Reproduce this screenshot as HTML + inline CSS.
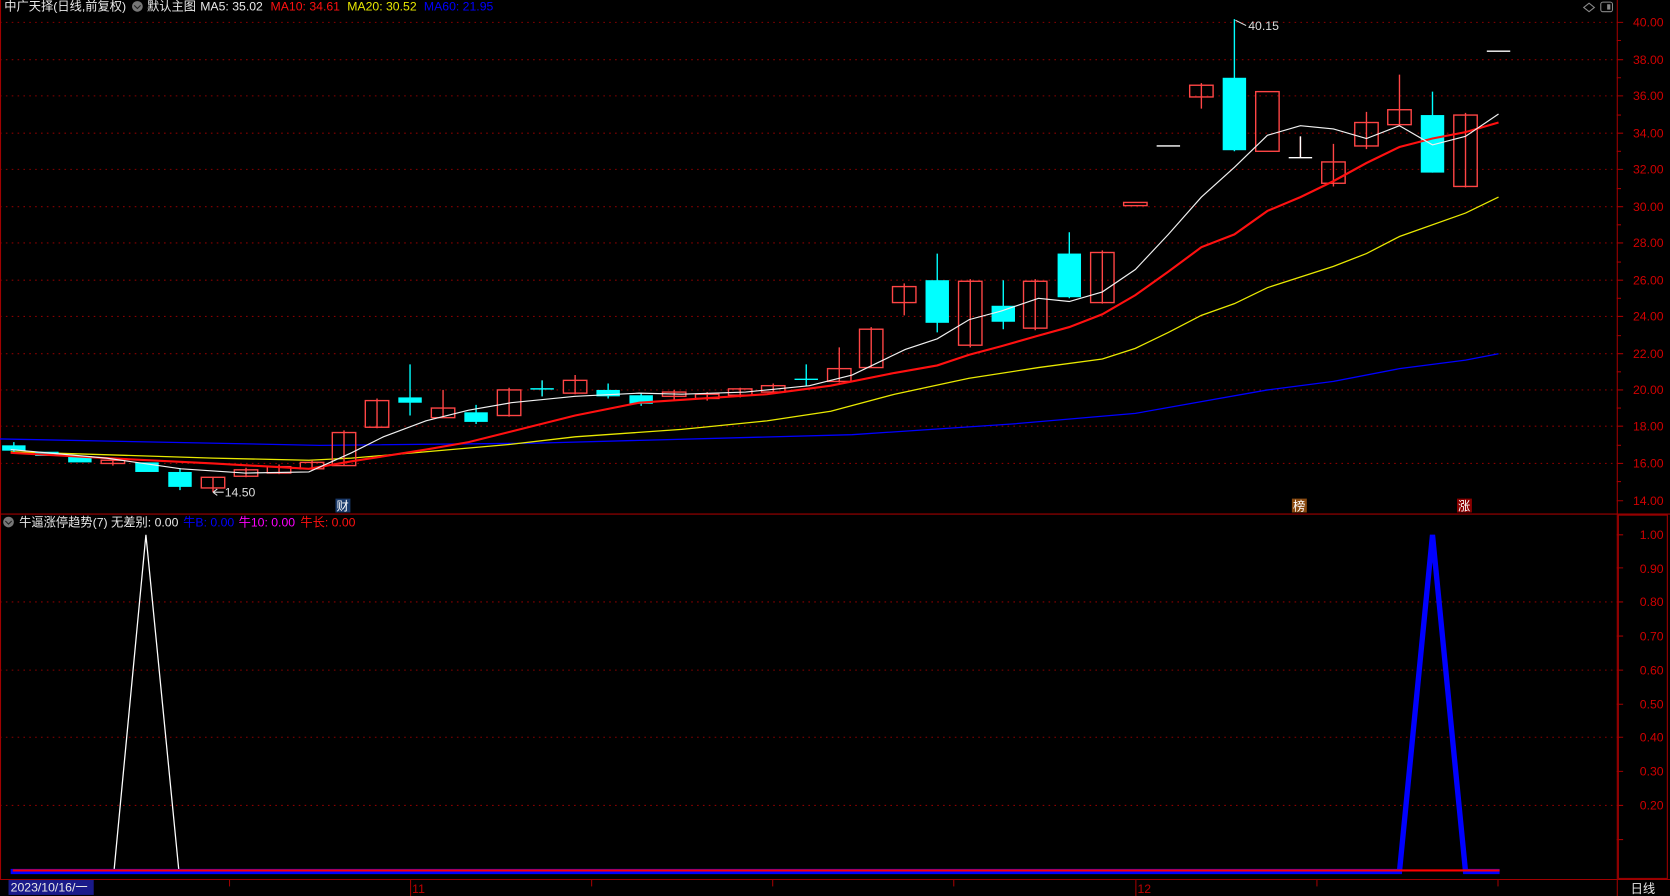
<!DOCTYPE html>
<html><head><meta charset="utf-8"><style>
html,body{margin:0;padding:0;background:#000;width:1670px;height:896px;overflow:hidden}
svg{display:block}
text{font-family:"Liberation Sans","Noto Sans CJK SC",sans-serif;font-size:11.5px}
</style></head><body>
<svg width="1670" height="896" viewBox="0 0 1568 841" preserveAspectRatio="none">
<rect width="1568" height="841" fill="#000"/>
<g stroke="#8a0000" stroke-width="1" stroke-dasharray="1.5,4">
<line x1="0" y1="21" x2="1518" y2="21"/><line x1="0" y1="56" x2="1518" y2="56"/><line x1="0" y1="90" x2="1518" y2="90"/><line x1="0" y1="125" x2="1518" y2="125"/><line x1="0" y1="159" x2="1518" y2="159"/><line x1="0" y1="194" x2="1518" y2="194"/><line x1="0" y1="228" x2="1518" y2="228"/><line x1="0" y1="263" x2="1518" y2="263"/><line x1="0" y1="297" x2="1518" y2="297"/><line x1="0" y1="332" x2="1518" y2="332"/><line x1="0" y1="366" x2="1518" y2="366"/><line x1="0" y1="400" x2="1518" y2="400"/><line x1="0" y1="435" x2="1518" y2="435"/>
<line x1="0" y1="565" x2="1518" y2="565"/><line x1="0" y1="629" x2="1518" y2="629"/><line x1="0" y1="692" x2="1518" y2="692"/><line x1="0" y1="756" x2="1518" y2="756"/>
</g>
<g stroke="#a00000" fill="none">
<line x1="1518.5" y1="0" x2="1518.5" y2="841"/>
<line x1="0" y1="482.5" x2="1568" y2="482.5"/>
<line x1="0" y1="825.5" x2="1568" y2="825.5"/>
<line x1="0.5" y1="0" x2="0.5" y2="825"/>
<rect x="1519.5" y="483.5" width="46" height="341"/>
<line x1="385.5" y1="826" x2="385.5" y2="841"/><line x1="1066.5" y1="826" x2="1066.5" y2="841"/>
<line x1="215.5" y1="826" x2="215.5" y2="832"/><line x1="555.5" y1="826" x2="555.5" y2="832"/><line x1="725.5" y1="826" x2="725.5" y2="832"/><line x1="895.5" y1="826" x2="895.5" y2="832"/><line x1="1236.5" y1="826" x2="1236.5" y2="832"/><line x1="1406.5" y1="826" x2="1406.5" y2="832"/>
</g>
<g stroke="#a00000">
<path d="M1518 21h6M1518 38h4M1518 56h6M1518 73h4M1518 90h6M1518 108h4M1518 125h6M1518 142h4M1518 159h6M1518 177h4M1518 194h6M1518 211h4M1518 228h6M1518 246h4M1518 263h6M1518 280h4M1518 297h6M1518 315h4M1518 332h6M1518 349h4M1518 366h6M1518 383h4M1518 400h6M1518 418h4M1518 435h6M1518 452h4M1518 470h6"/>
<path d="M1518 502h6M1518 533h6M1518 565h6M1518 597h6M1518 629h6M1518 661h6M1518 692h6M1518 724h6M1518 756h6M1518 788h6"/>
</g>
<g fill="#d00000" text-anchor="end">
<text x="1562" y="25">40.00</text><text x="1562" y="60">38.00</text><text x="1562" y="94">36.00</text><text x="1562" y="129">34.00</text><text x="1562" y="163">32.00</text><text x="1562" y="198">30.00</text><text x="1562" y="232">28.00</text><text x="1562" y="267">26.00</text><text x="1562" y="301">24.00</text><text x="1562" y="336">22.00</text><text x="1562" y="370">20.00</text><text x="1562" y="404">18.00</text><text x="1562" y="439">16.00</text><text x="1562" y="474">14.00</text>
<text x="1562" y="506">1.00</text><text x="1562" y="538">0.90</text><text x="1562" y="569">0.80</text><text x="1562" y="601">0.70</text><text x="1562" y="633">0.60</text><text x="1562" y="665">0.50</text><text x="1562" y="696">0.40</text><text x="1562" y="728">0.30</text><text x="1562" y="760">0.20</text>
</g>
<!-- MA60 -->
<polyline fill="none" stroke="#0000ff" stroke-width="1.2" points="0,412 300,418 500,416 800,408 950,398 1066,388 1128,377 1190,366 1252,358 1314,346 1376,338 1407,332"/>
<!-- MA20 -->
<polyline fill="none" stroke="#e8e800" stroke-width="1.2" points="10,424 200,430 290,432 330,430 400,424 480,417 540,410 640,403 720,395 780,386 840,370 910,355 975,345 1035,337 1066,327 1097,312 1128,296 1159,285 1190,270 1252,250 1283,238 1314,222 1376,200 1407,185"/>
<!-- candles -->
<g stroke="#ff4545" fill="none" stroke-width="1.3">
<path d="M106 432v5M200 448v14M231 439v9M262 436v9M293 432v9M323 404v33M354 374v28M416 366v26M478 364v27M509 357v15M540 352v18M633 366v9M664 368v8M695 364v9M726 360v9M788 326v33M818 307v38M849 266v30M911 262v64M972 262v48M1035 235v50M1128 78v24M1221 128v20M1252 135v40M1283 105v35M1314 70v48M1376 106v70"/>
<rect x="95" y="432" width="22" height="3"/><rect x="189" y="448" width="22" height="10"/><rect x="220" y="441" width="22" height="6"/><rect x="251" y="438" width="22" height="6"/><rect x="282" y="434" width="22" height="6"/><rect x="312" y="406" width="22" height="31"/><rect x="343" y="376" width="22" height="25"/><rect x="405" y="383" width="22" height="9"/><rect x="467" y="366" width="22" height="24"/><rect x="529" y="357" width="22" height="12"/><rect x="622" y="368" width="22" height="4"/><rect x="653" y="370" width="22" height="4"/><rect x="684" y="365" width="22" height="6"/><rect x="715" y="362" width="22" height="6"/><rect x="777" y="346" width="22" height="12"/><rect x="807" y="309" width="22" height="36"/><rect x="838" y="269" width="22" height="15"/><rect x="900" y="264" width="22" height="60"/><rect x="961" y="264" width="22" height="44"/><rect x="1024" y="237" width="22" height="47"/><rect x="1055" y="190" width="22" height="3"/><rect x="1117" y="80" width="22" height="11"/><rect x="1179" y="86" width="22" height="56"/><rect x="1241" y="152" width="22" height="20"/><rect x="1272" y="115" width="22" height="22"/><rect x="1303" y="103" width="22" height="14"/><rect x="1365" y="108" width="22" height="67"/>
</g>
<g stroke="#00ffff" stroke-width="1.3">
<path d="M13 415v10M169 440v20M385 342v48M447 380v18M509 357v15M571 360v14M602 369v12M757 342v20M880 238v74M942 263v46M1004 218v62M1159 18v124M1345 86v76"/>
<path d="M498 365h22M746 356h22"/>
</g>
<g fill="#00ffff">
<rect x="2" y="418" width="22" height="5"/><rect x="33" y="424" width="22" height="4"/><rect x="64" y="428" width="22" height="6"/><rect x="127" y="434" width="22" height="9"/><rect x="158" y="443" width="22" height="14"/><rect x="374" y="373" width="22" height="5"/><rect x="436" y="387" width="22" height="9"/><rect x="560" y="366" width="22" height="6"/><rect x="591" y="371" width="22" height="8"/><rect x="869" y="263" width="22" height="40"/><rect x="931" y="287" width="22" height="15"/><rect x="993" y="238" width="22" height="41"/><rect x="1148" y="73" width="22" height="68"/><rect x="1334" y="108" width="22" height="54"/>
</g>
<g stroke="#fff" stroke-width="1.3"><path d="M1086 137h22M1210 148h22M1221 128v20M1396 48h22"/></g>
<!-- MA10 -->
<polyline fill="none" stroke="#ff1010" stroke-width="2" points="10,425 100,430 200,435 290,440 330,433 400,422 440,415 480,405 540,390 600,378 660,374 720,370 780,362 840,350 880,343 910,333 940,325 975,315 1004,307 1035,295 1066,277 1097,255 1128,232 1159,220 1190,198 1221,185 1252,170 1283,153 1314,138 1345,130 1376,124 1407,115"/>
<!-- MA5 -->
<polyline fill="none" stroke="#f0f0f0" stroke-width="1.1" points="10,422 100,430 170,440 230,444 290,443 330,425 360,410 400,395 440,385 480,378 540,372 600,369 640,370 700,368 760,362 800,352 850,328 880,318 910,300 940,292 975,280 1004,283 1035,274 1066,253 1097,220 1128,185 1159,157 1190,127 1221,118 1252,121 1283,130 1314,118 1345,136 1376,128 1407,107"/>
<!-- annotations -->
<text x="211" y="466" fill="#ddd">14.50</text><path d="M200 462h10M200 462l4-3M200 462l4 3" stroke="#ddd" fill="none"/>
<text x="1172" y="28" fill="#ddd">40.15</text><path d="M1160 19l10 5" stroke="#ddd"/>
<rect x="315" y="468" width="14" height="13" fill="#1a3a6a"/><text x="316" y="479" fill="#fff">财</text>
<rect x="1213" y="468" width="14" height="13" fill="#8a4a10"/><text x="1214" y="479" fill="#fff">榜</text>
<rect x="1368" y="468" width="14" height="13" fill="#8a0000"/><text x="1369" y="479" fill="#fff">涨</text>
<!-- header -->
<text x="4" y="10" fill="#e8e8e8">中广天择(日线,前复权)</text>
<circle cx="129" cy="6" r="5" fill="#777"/><path d="M126 5l3 3 3-3" stroke="#222" fill="none"/>
<text x="138" y="10" fill="#e8e8e8">默认主图</text>
<text x="188" y="10" fill="#e8e8e8">MA5: 35.02</text>
<text x="254" y="10" fill="#ff1010">MA10: 34.61</text>
<text x="326" y="10" fill="#e8e800">MA20: 30.52</text>
<text x="398" y="10" fill="#0000ff">MA60: 21.95</text>
<path d="M1487 7l5-4 5 4-5 4z" stroke="#888" fill="none"/>
<rect x="1503" y="2" width="11" height="9" rx="2" stroke="#888" fill="none"/><rect x="1509" y="4" width="3" height="5" fill="#888"/>
<circle cx="8" cy="490" r="5" fill="#777"/><path d="M5 489l3 3 3-3" stroke="#222" fill="none"/>
<text x="18" y="494" fill="#e8e8e8">牛逼涨停趋势(7) 无差别: 0.00</text>
<text x="172" y="494" fill="#0000ff">牛B: 0.00</text>
<text x="224" y="494" fill="#ff00ff">牛10: 0.00</text>
<text x="282" y="494" fill="#ff1010">牛长: 0.00</text>
<!-- indicator -->
<polyline fill="none" stroke="#fff" stroke-width="1.2" points="107,818 137,502 168,818"/>
<polyline fill="none" stroke="#0000ff" stroke-width="5" points="10,818 1314,818 1345,502 1376,818 1408,818"/>
<line x1="12" y1="817" x2="1408" y2="817" stroke="#ff0000" stroke-width="2"/>
<!-- bottom -->
<rect x="8" y="826" width="80" height="14" fill="#1a1a8a"/>
<text x="10" y="837" fill="#e8e8e8">2023/10/16/一</text>
<text x="387" y="838" fill="#c00000">11</text>
<text x="1068" y="838" fill="#c00000">12</text>
<text x="1531" y="838" fill="#e8e8e8">日线</text>
</svg>
</body></html>
